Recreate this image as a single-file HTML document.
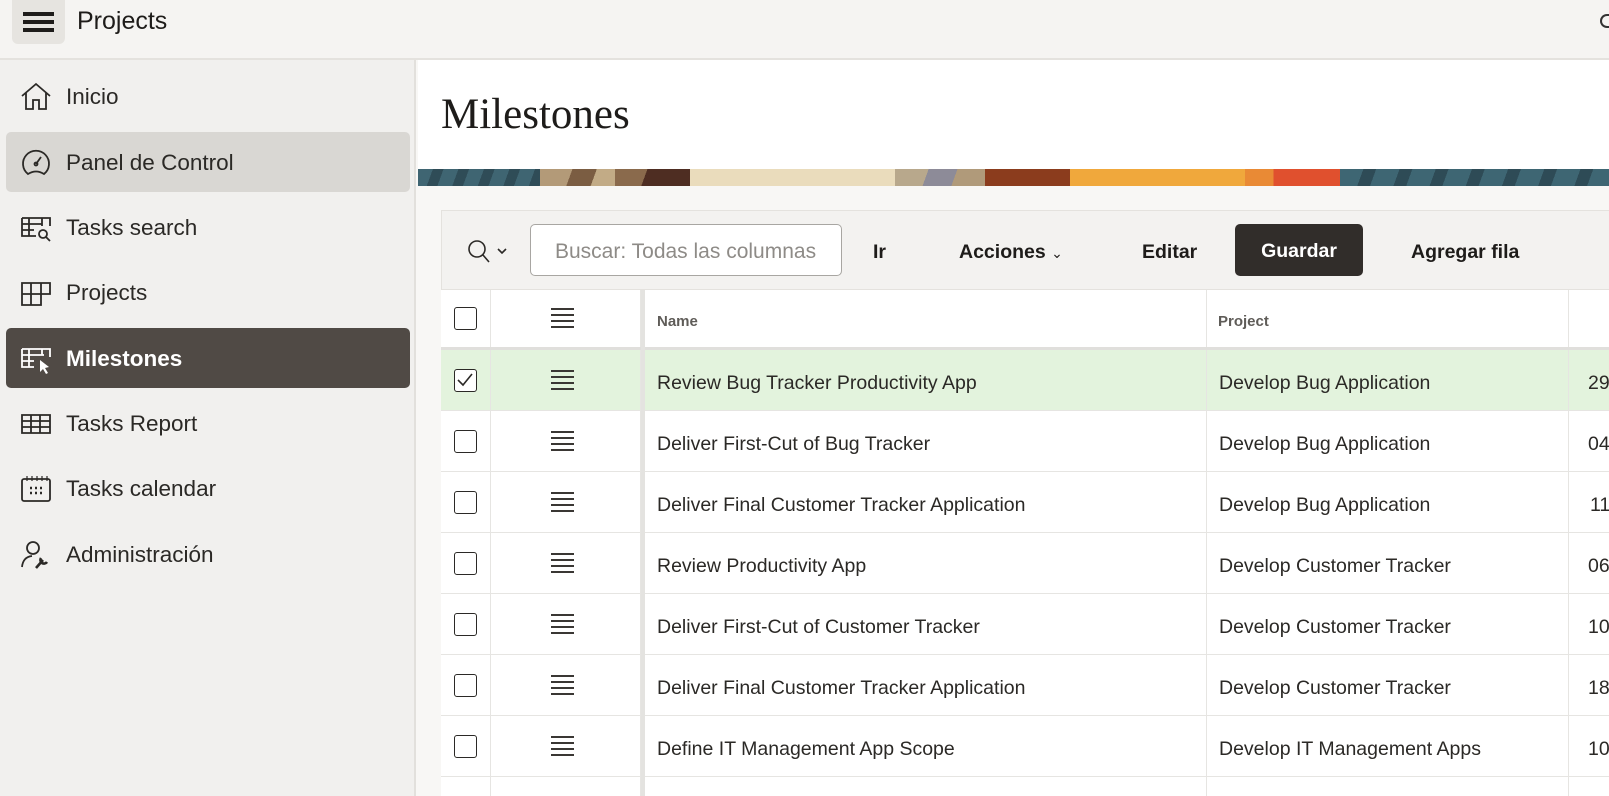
<!DOCTYPE html>
<html><head><meta charset="utf-8"><style>
*{box-sizing:border-box;margin:0;padding:0}
html{width:1609px;height:796px;overflow:hidden}
body{width:1609px;height:796px;overflow:hidden;background:#f8f7f5;font-family:"Liberation Sans",sans-serif;color:#2b2926;position:relative}
.hdr{position:absolute;left:0;top:0;width:1609px;height:60px;background:#f5f4f2;border-bottom:2px solid #e4e2de}
.hamb{position:absolute;left:12px;top:0;width:53px;height:44px;background:#e6e4e0;border-radius:0 0 6px 6px}
.hamb i{position:absolute;left:11px;width:31px;height:3.5px;background:#1e1c1a}
.title{position:absolute;left:77px;top:7px;font-size:25px;color:#1e1c1a}
.side{position:absolute;left:0;top:60px;width:416px;height:736px;background:#f1f0ee;border-right:2px solid #e2e0dc}
.item{position:absolute;left:6px;width:404px;height:60px;border-radius:5px}
.item span{position:absolute;left:60px;top:18px;font-size:22.5px;color:#2b2926}
.item svg{position:absolute;left:14px;top:15px}
.sel1{background:#d9d7d3}
.sel2{background:#504a45}
.sel2 span{color:#fff;font-weight:bold}
.main{position:absolute;left:418px;top:60px;width:1191px;height:109px;background:#fff}
h1{position:absolute;left:441px;top:90px;font-family:"Liberation Serif",serif;font-weight:normal;font-size:43px;color:#1e1c1a}
.banner{position:absolute;left:418px;top:169px;width:1191px;height:17px;display:flex}
.tb{position:absolute;left:441px;top:210px;width:1168px;height:80px;background:#f3f2f0;border:1px solid #e4e2de;border-right:none}
.inp{position:absolute;left:530px;top:224px;width:312px;height:52px;border:1.5px solid #a8a6a2;border-radius:5px;background:#fff;font-size:21px;color:#8e8b87;padding:15px 0 0 24px;white-space:nowrap;overflow:hidden}
.btn{position:absolute;top:241px;font-size:19.5px;font-weight:bold;color:#1e1c1a}
.gu{position:absolute;left:1235px;top:224px;width:128px;height:52px;background:#312d2a;border-radius:5px;color:#fff;font-size:19.5px;font-weight:bold;text-align:center;line-height:54px}
.tbl{position:absolute;left:441px;top:290px;width:1168px;height:506px;background:#fff;overflow:hidden}
.row{position:absolute;left:0;width:1168px;height:61px;border-bottom:1.5px solid #e6e5e2}
.row div{position:absolute;top:0;height:100%;border-right:1.5px solid #e6e5e2}
.c0{left:0;width:50px}.c1{left:50px;width:150px}.c2{left:204px;width:562px}.c3{left:762px;width:366px}.c4{left:1128px;width:40px;border:none!important}
.cb{position:absolute;left:13px;top:19px;width:23px;height:23px;border:1.6px solid #2b2926;border-radius:3px;background:#fff}
.dr{position:absolute;left:60px;top:20px;width:23px;height:20px;border-top:2px solid #3a3734;border-bottom:2px solid #3a3734}
.dr:before,.dr:after{content:"";position:absolute;left:0;width:23px;height:2px;background:#3a3734}
.dr:before{top:4px}.dr:after{top:10px}
.t{position:absolute;top:22px;font-size:19.5px;color:#2b2926;white-space:nowrap;border:none!important}
.sep{position:absolute;left:200px;top:0;width:4px;height:506px;background:#e4e3e0}
.hd .t{font-size:15px;color:#5f5c58;font-weight:bold;top:23px}
</style></head><body>
<div class="hdr"><div class="hamb"><i style="top:12px"></i><i style="top:20px"></i><i style="top:28px"></i></div>
<div class="title">Projects</div>
<div style="position:absolute;left:1600px;top:14px;width:9px;height:14px;border:2px solid #333;border-right:none;border-radius:7px 0 0 7px"></div></div>
<div class="side">
<div class="item" style="top:6px"><svg width="32" height="32" viewBox="0 0 32 32" fill="none" stroke="#2b2926" stroke-width="1.8"><path d="M2 15 L16 3 L30 15 M6 12 V28 H13 V19 H19 V28 H26 V12"/></svg><span>Inicio</span></div>
<div class="item sel1" style="top:72px"><svg width="32" height="32" viewBox="0 0 32 32" fill="none" stroke="#2b2926" stroke-width="1.8"><path d="M8 27 A13 13 0 1 1 24 27 Q16 22 8 27Z M16 17 L21 10"/><circle cx="16" cy="17" r="1.5"/></svg><span>Panel de Control</span></div>
<div class="item" style="top:137px"><svg width="32" height="32" viewBox="0 0 32 32" fill="none" stroke="#2b2926" stroke-width="1.8"><path d="M2 6 H30 V14 M2 6 V24 H16 M2 12 H22 M2 18 H14 M9 6 V24 M22 6 V14"/><circle cx="23" cy="22" r="4"/><path d="M26 25 L30 29"/></svg><span>Tasks search</span></div>
<div class="item" style="top:202px"><svg width="32" height="32" viewBox="0 0 32 32" fill="none" stroke="#2b2926" stroke-width="1.8"><path d="M2 6 H30 V17 H2 Z M2 6 V28 H21 V6 M2 17 V28 M11 6 V28"/></svg><span>Projects</span></div>
<div class="item sel2" style="top:268px"><svg width="32" height="32" viewBox="0 0 32 32" fill="none" stroke="#fff" stroke-width="1.8"><path d="M2 6 H30 V14 M2 6 V24 H14 M2 12 H24 M2 18 H14 M9 6 V24 M22 6 V12"/><path d="M20 17 L20 29 L23 26 L26 31 L28 30 L25 25 L29 24 Z" fill="#fff" stroke="none"/></svg><span>Milestones</span></div>
<div class="item" style="top:333px"><svg width="32" height="32" viewBox="0 0 32 32" fill="none" stroke="#2b2926" stroke-width="1.8"><path d="M2 7 H30 V25 H2 Z M2 13 H30 M2 19 H30 M11 7 V25 M20 7 V25"/></svg><span>Tasks Report</span></div>
<div class="item" style="top:398px"><svg width="32" height="32" viewBox="0 0 32 32" fill="none" stroke="#2b2926" stroke-width="1.8"><rect x="2" y="6" width="28" height="22" rx="2"/><path d="M7 3 V8 M12 3 V8 M17 3 V8 M22 3 V8 M27 3 V8" stroke-width="1.2"/><path d="M10 15 H12 M15 15 H17 M20 15 H22 M10 20 H12 M15 20 H17 M20 20 H22" stroke-width="2.5"/></svg><span>Tasks calendar</span></div>
<div class="item" style="top:464px"><svg width="32" height="32" viewBox="0 0 32 32" fill="none" stroke="#2b2926" stroke-width="1.8"><circle cx="13" cy="9" r="6"/><path d="M2 28 Q3 18 12 17"/><path d="M16 29 L23 21 M21 19 A3 3 0 0 0 27 23" stroke-width="2.6"/></svg><span>Administración</span></div>
</div>
<div class="main"></div>
<h1>Milestones</h1>
<div class="banner">
<div style="width:122px;background:repeating-linear-gradient(110deg,#3f6572 0 14px,#2f4c57 14px 24px)"></div>
<div style="width:75px;background:linear-gradient(110deg,#b39a78 0 40%,#7b5d42 40% 70%,#c2ab86 70%)"></div>
<div style="width:75px;background:linear-gradient(110deg,#8a6a4c 0 40%,#4e2d22 40%)"></div>
<div style="width:205px;background:#eadcbc"></div>
<div style="width:90px;background:linear-gradient(110deg,#b8a88c 0 35%,#8d8b98 35% 65%,#b09a7a 65%)"></div>
<div style="width:85px;background:#8b3c1d"></div>
<div style="width:175px;background:#f0a83c"></div>
<div style="width:95px;background:linear-gradient(90deg,#e98a35 0 30%,#e0502e 30%)"></div>
<div style="flex:1;background:repeating-linear-gradient(110deg,#3e6673 0 22px,#2e4b56 22px 34px)"></div>
</div>
<div class="tb"></div>
<svg style="position:absolute;left:466px;top:238px" width="44" height="28" viewBox="0 0 44 28" fill="none" stroke="#2b2926" stroke-width="1.6"><circle cx="11" cy="11" r="8"/><path d="M17 17 L23 24 M32 11 L36 15 L40 11"/></svg>
<div class="inp">Buscar: Todas las columnas</div>
<div class="btn" style="left:873px">Ir</div>
<div class="btn" style="left:959px">Acciones <span style="font-weight:normal;font-size:14px">&#8964;</span></div>
<div class="btn" style="left:1142px">Editar</div>
<div class="gu">Guardar</div>
<div class="btn" style="left:1411px">Agregar fila</div>
<div class="tbl">
<div class="row hd" style="top:0;height:60px;border-bottom:3px solid #e0dfdc"><div class="c0"><span class="cb" style="top:17px"></span></div><div class="c1"><span class="dr" style="top:18px"></span></div><div class="c2"><span class="t" style="left:12px">Name</span></div><div class="c3"><span class="t" style="left:15px">Project</span></div><div class="c4"></div></div>
<div class="row" style="top:60px;background:#e3f3dd"><div class="c0"><span class="cb"><svg width="20" height="20" viewBox="0 0 20 20" fill="none" stroke="#2b2926" stroke-width="1.6"><path d="M3 10 L8 15 L17 4"/></svg></span></div><div class="c1"><span class="dr"></span></div><div class="c2"><span class="t" style="left:12px">Review Bug Tracker Productivity App</span></div><div class="c3"><span class="t" style="left:16px">Develop Bug Application</span></div><div class="c4"><span class="t" style="left:19px">29</span></div></div>
<div class="row" style="top:121px"><div class="c0"><span class="cb"></span></div><div class="c1"><span class="dr"></span></div><div class="c2"><span class="t" style="left:12px">Deliver First-Cut of Bug Tracker</span></div><div class="c3"><span class="t" style="left:16px">Develop Bug Application</span></div><div class="c4"><span class="t" style="left:19px">04</span></div></div>
<div class="row" style="top:182px"><div class="c0"><span class="cb"></span></div><div class="c1"><span class="dr"></span></div><div class="c2"><span class="t" style="left:12px">Deliver Final Customer Tracker Application</span></div><div class="c3"><span class="t" style="left:16px">Develop Bug Application</span></div><div class="c4"><span class="t" style="left:21px">11/</span></div></div>
<div class="row" style="top:243px"><div class="c0"><span class="cb"></span></div><div class="c1"><span class="dr"></span></div><div class="c2"><span class="t" style="left:12px">Review Productivity App</span></div><div class="c3"><span class="t" style="left:16px">Develop Customer Tracker</span></div><div class="c4"><span class="t" style="left:19px">06</span></div></div>
<div class="row" style="top:304px"><div class="c0"><span class="cb"></span></div><div class="c1"><span class="dr"></span></div><div class="c2"><span class="t" style="left:12px">Deliver First-Cut of Customer Tracker</span></div><div class="c3"><span class="t" style="left:16px">Develop Customer Tracker</span></div><div class="c4"><span class="t" style="left:19px">10</span></div></div>
<div class="row" style="top:365px"><div class="c0"><span class="cb"></span></div><div class="c1"><span class="dr"></span></div><div class="c2"><span class="t" style="left:12px">Deliver Final Customer Tracker Application</span></div><div class="c3"><span class="t" style="left:16px">Develop Customer Tracker</span></div><div class="c4"><span class="t" style="left:19px">18</span></div></div>
<div class="row" style="top:426px"><div class="c0"><span class="cb"></span></div><div class="c1"><span class="dr"></span></div><div class="c2"><span class="t" style="left:12px">Define IT Management App Scope</span></div><div class="c3"><span class="t" style="left:16px">Develop IT Management Apps</span></div><div class="c4"><span class="t" style="left:19px">10</span></div></div>
<div class="row" style="top:487px;height:19px;border:none"><div class="c0"></div><div class="c1"></div><div class="c2"></div><div class="c3"></div></div>
<div class="sep"></div>
</div>
</body></html>
